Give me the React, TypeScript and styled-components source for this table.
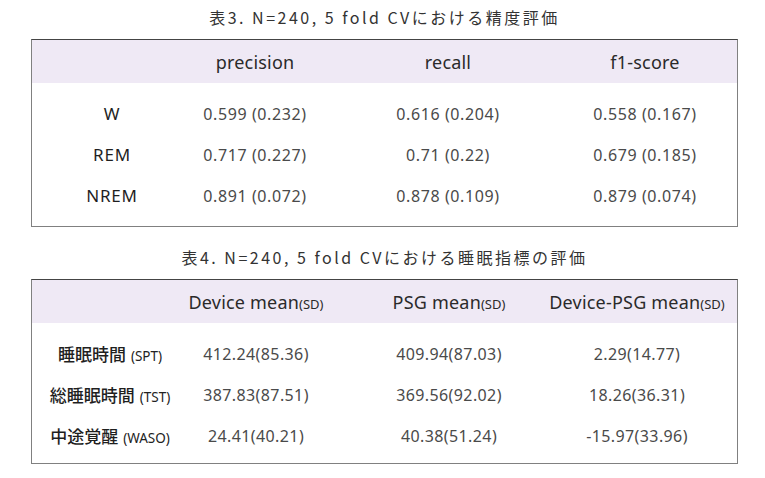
import React, { FC } from "react";
import styled, { createGlobalStyle } from "styled-components";

const GlobalStyle = createGlobalStyle`
  html, body {
    margin: 0;
    padding: 0;
    background: #ffffff;
  }
  body {
    font-family: "Noto Sans", "Noto Sans CJK JP", sans-serif;
    color: #333333;
  }
`

interface Cell {
  main: string
  sub?: string
}

interface TableProps {
  title: string
  columns: string
  headers: Cell[]
  rows: Cell[][]
  cjkLabels?: boolean
  bottomPad: number
}

const accuracyRows: Cell[][] = [
  [{ main: "W" }, { main: "0.599 (0.232)" }, { main: "0.616 (0.204)" }, { main: "0.558 (0.167)" }],
  [{ main: "REM" }, { main: "0.717 (0.227)" }, { main: "0.71 (0.22)" }, { main: "0.679 (0.185)" }],
  [{ main: "NREM" }, { main: "0.891 (0.072)" }, { main: "0.878 (0.109)" }, { main: "0.879 (0.074)" }],
]

const sleepRows: Cell[][] = [
  [{ main: "睡眠時間", sub: "(SPT)" }, { main: "412.24(85.36)" }, { main: "409.94(87.03)" }, { main: "2.29(14.77)" }],
  [{ main: "総睡眠時間", sub: "(TST)" }, { main: "387.83(87.51)" }, { main: "369.56(92.02)" }, { main: "18.26(36.31)" }],
  [{ main: "中途覚醒", sub: "(WASO)" }, { main: "24.41(40.21)" }, { main: "40.38(51.24)" }, { main: "-15.97(33.96)" }],
]

const ResultTable: FC<TableProps> = (props) => {
  return (
    <Section>
      <Caption>{props.title}</Caption>
      <Box>
        <HeaderBand $columns={props.columns}>
          {props.headers.map((h, i) => (
            <HeadCell key={i}>
              {h.main}
              {h.sub && <HeadSub>{h.sub}</HeadSub>}
            </HeadCell>
          ))}
        </HeaderBand>
        <Body $bottomPad={props.bottomPad}>
          {props.rows.map((row, r) => (
            <Row key={r} $columns={props.columns}>
              {row.map((cell, c) =>
                c === 0 ? (
                  <LabelCell key={c} $cjk={!!props.cjkLabels}>
                    {cell.main}
                    {cell.sub && <LabelSub>{cell.sub}</LabelSub>}
                  </LabelCell>
                ) : (
                  <ValueCell key={c} $wide={!!props.cjkLabels}>{cell.main}</ValueCell>
                )
              )}
            </Row>
          ))}
        </Body>
      </Box>
    </Section>
  )
}

export default function App() {
  return (
    <Page>
      <GlobalStyle />
      <ResultTable
        title="表3. N=240, 5 fold CVにおける精度評価"
        columns="160px 126px 260px 134px 1fr"
        headers={[{ main: "" }, { main: "precision" }, { main: "recall" }, { main: "f1-score" }]}
        rows={accuracyRows}
        bottomPad={10}
      />
      <ResultTable
        title="表4. N=240, 5 fold CVにおける睡眠指標の評価"
        columns="156px 136px 250px 126px 1fr"
        headers={[
          { main: "" },
          { main: "Device mean", sub: "(SD)" },
          { main: "PSG mean", sub: "(SD)" },
          { main: "Device-PSG mean", sub: "(SD)" },
        ]}
        rows={sleepRows}
        cjkLabels
        bottomPad={7}
      />
    </Page>
  )
}

const Page = styled.div`
  width: 765px;
  height: 478px;
  box-sizing: border-box;
  padding: 7px 27px 0 31px;
  display: flex;
  flex-direction: column;
  gap: 20px;
`

const Section = styled.section`
  display: flex;
  flex-direction: column;
  gap: 12px;
`

const Caption = styled.div`
  height: 20px;
  line-height: 20px;
  text-align: center;
  font-family: "Noto Sans CJK JP", sans-serif;
  font-size: 16px;
  letter-spacing: 2.5px;
  color: #333333;
  white-space: nowrap;
`

const Box = styled.div`
  width: 707px;
  box-sizing: border-box;
  border: 1px solid #808080;
  border-top-color: #444444;
`

const HeaderBand = styled.div<{ $columns: string }>`
  display: grid;
  grid-template-columns: ${(p) => p.$columns};
  height: 43px;
  align-items: center;
  background: #efe9f5;
`

const HeadCell = styled.div`
  display: flex;
  justify-content: center;
  align-items: baseline;
  white-space: nowrap;
  font-size: 18px;
  letter-spacing: 0.2px;
  color: #2a2a2a;
`

const HeadSub = styled.span`
  font-size: 13px;
  letter-spacing: 0;
`

const Body = styled.div<{ $bottomPad: number }>`
  padding: 10px 0 ${(p) => p.$bottomPad}px;
`

const Row = styled.div<{ $columns: string }>`
  display: grid;
  grid-template-columns: ${(p) => p.$columns};
  height: 41px;
  align-items: center;
`

const LabelCell = styled.div<{ $cjk: boolean }>`
  display: flex;
  justify-content: center;
  align-items: baseline;
  gap: 5px;
  white-space: nowrap;
  font-family: ${(p) => (p.$cjk ? `"Noto Sans CJK JP", sans-serif` : `"Noto Sans", sans-serif`)};
  font-size: 17px;
  font-weight: ${(p) => (p.$cjk ? 500 : 400)};
  letter-spacing: ${(p) => (p.$cjk ? "0" : "0.8px")};
  color: #1f1f1f;
`

const LabelSub = styled.span`
  font-family: "Noto Sans", sans-serif;
  font-size: 13.5px;
  font-weight: 400;
  color: #222222;
`

const ValueCell = styled.div<{ $wide: boolean }>`
  display: flex;
  justify-content: center;
  white-space: nowrap;
  font-size: 16px;
  letter-spacing: ${(p) => (p.$wide ? "0.4px" : "0.6px")};
  color: #4a4a4a;
`
